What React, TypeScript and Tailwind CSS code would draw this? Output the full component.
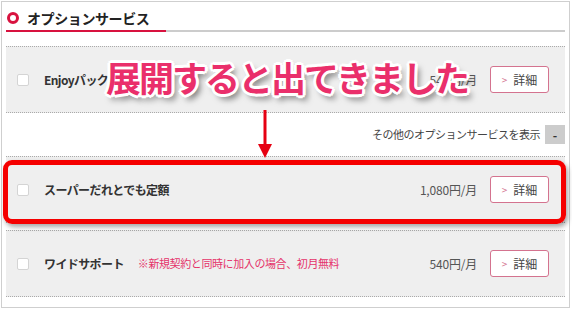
import React from 'react';

type Row = {
  name: string;
  note?: string;
  price: string;
};

const FONT = "font-['Noto_Sans_CJK_JP','Noto_Sans',sans-serif]";

function Checkbox() {
  return <span className="block h-[12px] w-[12px] shrink-0 rounded-[2px] border border-[#d4d4d4] bg-white" />;
}

function DetailButton() {
  return (
    <button className="flex h-[27px] w-[59px] shrink-0 items-center justify-center gap-[6px] rounded-[3px] border border-[#d4738f] bg-white">
      <span className="text-[10px] leading-none text-[#d4738f]">&gt;</span>
      <span className="text-[12px] leading-none text-[#444]">詳細</span>
    </button>
  );
}

function OptionRow({ row }: { row: Row }) {
  return (
    <div className="flex h-[67px] items-center border-y border-dotted border-[#aaa] bg-[#efefef] pl-[11px] pr-[16px]">
      <Checkbox />
      <span className="ml-[15px] text-[12px] font-bold tracking-[-0.6px] text-[#333]">{row.name}</span>
      {row.note && <span className="ml-[14px] text-[11px] tracking-[-0.4px] text-[#e5336a]">{row.note}</span>}
      <span className="ml-auto mr-[13px] text-[12px] tracking-[-0.2px] text-[#555]">{row.price}</span>
      <DetailButton />
    </div>
  );
}

export default function App() {
  const enjoy: Row = { name: 'Enjoyパック', price: '540円/月' };
  const dareDemo: Row = { name: 'スーパーだれとでも定額', price: '1,080円/月' };
  const wide: Row = { name: 'ワイドサポート', note: '※新規契約と同時に加入の場合、初月無料', price: '540円/月' };

  return (
    <div className={`relative h-[309px] w-[572px] overflow-hidden bg-white pl-[1px] pt-[1px] ${FONT}`}>
      <div className="h-[307px] w-[569px] border border-[#cfcfcf] px-[4px]">
        {/* header */}
        <div className="flex h-[28px] items-center pl-[1px] pt-[4px]">
          <span className="block h-[12px] w-[12px] rounded-full border-[3px] border-[#d8123f]" />
          <span className="ml-[8px] text-[14px] font-bold tracking-[-0.4px] text-[#222]">オプションサービス</span>
        </div>
        <div className="flex h-[2px]">
          <div className="w-[160px] bg-[#d8123f]" />
          <div className="flex-1 bg-[#cccccc]" />
        </div>

        <div className="mt-[14px]">
          <OptionRow row={enjoy} />
          <div className="flex h-[43px] items-center justify-end">
            <span className="text-[11px] tracking-[-0.5px] text-[#444]">その他のオプションサービスを表示</span>
            <span className="ml-[5px] flex h-[19px] w-[20px] items-center justify-center bg-[#cccccc] text-[12px] font-bold leading-none text-[#333]">
              -
            </span>
          </div>
          <OptionRow row={dareDemo} />
          <div className="h-[7px]" />
          <OptionRow row={wide} />
        </div>
      </div>

      {/* highlight frame */}
      <div className="absolute left-[3px] top-[160px] h-[64px] w-[563px] rounded-[9px] border-[5px] border-[#f50000] shadow-[2px_3px_5px_rgba(0,0,0,0.35)]" />

      {/* arrow */}
      <svg className="absolute left-[257px] top-[110px]" width="16" height="50" viewBox="0 0 16 50">
        <line x1="8" y1="0" x2="8" y2="38" stroke="#e60012" strokeWidth="3" />
        <polygon points="1,34 15,34 8,48" fill="#e60012" />
      </svg>

      {/* callout */}
      <div className="absolute left-[106px] top-[59px] whitespace-nowrap text-[35px] font-bold leading-none tracking-[-2px] text-[#ea2f6b] [text-shadow:2px_0_0_#fff,-2px_0_0_#fff,0_2px_0_#fff,0_-2px_0_#fff,2px_2px_0_#fff,-2px_-2px_0_#fff,2px_-2px_0_#fff,-2px_2px_0_#fff,3px_0_0_#fff,-3px_0_0_#fff,0_3px_0_#fff,0_-3px_0_#fff,4px_5px_6px_rgba(0,0,0,0.55)]">
        展開すると出てきました
      </div>
    </div>
  );
}
